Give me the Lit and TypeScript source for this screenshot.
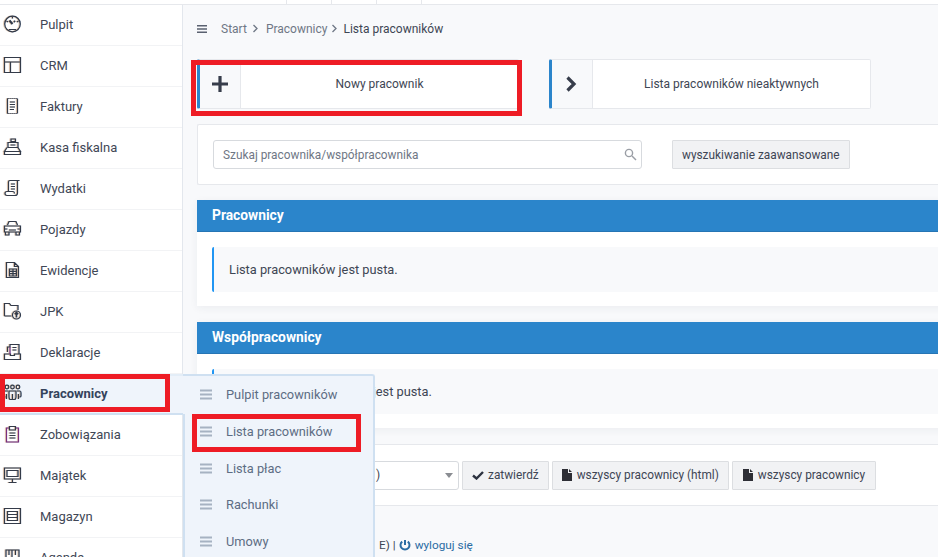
import { LitElement, html, css, svg } from "lit";
import { customElement } from "lit/decorators.js";

const icons: Record<string, unknown> = {
  gauge: svg`<circle cx="12.5" cy="12" r="7.8"/><path d="M9 17.5h7M12.5 4.5v2M6.5 9l1.6 1M18.5 9l-1.6 1"/><path stroke-width="2" d="M12.5 12L9.5 8.5M14 9l1 1"/>`,
  table: svg`<path d="M4.5 4.5h16v15h-16zM4.5 9h16M10.5 9v10.5"/>`,
  receipt: svg`<path stroke-dasharray="1.2 .8" d="M7.5 4.5h10M7.5 19.5h10"/><path d="M7.5 4.5v15M17.5 4.5v15M10 8h5M10 10.5h5M10 13h5M10 15.5h4"/>`,
  register: svg`<path d="M11 4h4.5v2.500H11zM8 7.500h10v5H8zM7 12.500l-2.500 4h16l-2.500-4M4.500 16.500v3h16v-3M10.500 10h5"/>`,
  expense: svg`<path d="M8.500 15.500V6a1.500 1.500 0 0 1 1.500-1.500h9.500M17.500 4.500V17a2.500 2.500 0 0 1-2.500 2.500H7a2 2 0 0 1-2-2c0-1 .500-2 2-2h6c1 0 1.500 1 1.500 2M11 8h4M11 10.500h4M11 13h4"/>`,
  car: svg`<path d="M7.500 8l1.500-3.500h7L17.500 8M4.500 9h16v6h-16zM5.500 15v3h3.500v-3M16 15v3h3.500v-3M4.500 12h3M17.500 12h3M9 13h7"/>`,
  doc: svg`<path d="M6.500 4.500h8l4 4v11h-12zM14.500 4.500v4h4M9.500 11h7v7h-7zM9.500 13.300h7M9.500 15.600h7M13 11v7"/>`,
  folder: svg`<path d="M4.500 17V4.500h5l1.500 2h7v4.500M4.500 17h7"/><circle cx="16.500" cy="16" r="4"/><path stroke-width="1.600" d="M16.500 18.500v-5M14.800 15.200l1.700-1.700 1.700 1.700"/>`,
  decl: svg`<path d="M7.500 12V7H10V4.500h9V14M12.500 7.500h4M12.500 10h4M4.500 14h6v1.500h4V14h6v5.500h-16z"/><path stroke="#7a2f80" d="M10 7v7"/>`,
  people: svg`<circle cx="7" cy="6" r="1.800"/><circle cx="12.500" cy="6" r="1.800"/><circle cx="18" cy="6" r="1.800"/><path d="M5 10h3M5 10c-1 0-1 1-1 2v3c0 1 1 1 1.500 1M17 10h3c1 0 1 1 1 2v3c0 1-1 1-1.500 1M9 10h7v6c0 1-.500 2-1 2.500h-5c-.500-.500-1-1.500-1-2.500zM12.500 13v5.500M6.500 13v5M18.500 13v5"/>`,
  clip: svg`<path stroke="#7a2f80" d="M9.500 6H6.500v14h12V6h-3"/><path d="M9.500 4.500h6V8h-6zM9.500 11h6M9.500 13.500h6M9.500 16h6"/>`,
  monitor: svg`<path d="M4.500 5h16v11h-16zM7 7.500h11v6H7zM12.500 16v3M8.500 19.500h8"/>`,
  list: svg`<path d="M4.500 4.500h16v15h-16zM7.500 7.500h10v9h-10zM7.500 10.500h10M7.500 13.500h10"/>`,
  agenda: svg`<path d="M6 5h6v14H6zM12 5h7v14h-7M9 5v5M15.500 5v5"/>`,
};

const side = [
  ["gauge", "Pulpit"], ["table", "CRM"], ["receipt", "Faktury"], ["register", "Kasa fiskalna"],
  ["expense", "Wydatki"], ["car", "Pojazdy"], ["doc", "Ewidencje"], ["folder", "JPK"],
  ["decl", "Deklaracje"], ["people", "Pracownicy"], ["clip", "Zobowiązania"], ["monitor", "Majątek"],
  ["list", "Magazyn"], ["agenda", "Agenda"],
];
const fly = ["Pulpit pracowników", "Lista pracowników", "Lista płac", "Rachunki", "Umowy"];

const bars = html`<svg class="bars" viewBox="0 0 12 11"><path d="M0 1.500h12M0 5.500h12M0 9.500h12"/></svg>`;
const file = html`<svg class="file" viewBox="0 0 10 12"><path d="M0 0h6v4h4v8H0zM7 0l3 3H7z"/></svg>`;

@customElement("app-root")
export class AppRoot extends LitElement {
  static styles = css`
    :host { display: block; position: relative; width: 938px; height: 557px; overflow: hidden; background: #f8f9fb; font-family: Roboto, "Liberation Sans", sans-serif; font-size: 12px; color: #3e4654; }
    .top { height: 4px; background: #fff; border-bottom: 1px solid #e6e8ec; display: flex; padding-left: 286px; }
    .top i { width: 45px; height: 4px; border-left: 1px solid #e6e8ec; box-sizing: border-box; }
    .wrap { display: flex; align-items: flex-start; }
    .side { width: 182px; flex: none; background: #fff; border-right: 1px solid #e3e7ed; }
    .row { height: 41px; box-sizing: border-box; padding-bottom: 2px; border-bottom: 1px solid #f2f3f5; display: flex; align-items: center; font-size: 13px; color: #3f4756; }
    .row svg { width: 24px; height: 24px; margin: 0 16px 0 0; flex: none; fill: none; stroke: #343b49; stroke-width: 1.2; filter: drop-shadow(-.6px 0 0 rgba(240,160,80,.45)) drop-shadow(.6px 0 0 rgba(90,160,240,.45)); }
    .row.on { background: #eff4fb; font-weight: 700; color: #34435c; width: 183px; border-bottom: 2px solid #cfe0f1; padding: 0 0 1px; box-shadow: inset 0 2px 0 #e3edf7; }
    .main { flex: none; width: 900px; padding: 0 0 0 14px; box-sizing: border-box; }
    .crumb { height: 54px; display: flex; align-items: center; color: #6f7785; padding-bottom: 7px; box-sizing: border-box; }
    .crumb .bars { width: 10px; height: 10px; margin-right: 14px; stroke: #5a6170; }
    .crumb b { font-weight: 400; color: #3e4654; }
    .bars { fill: none; stroke: #a6b2c2; stroke-width: 1.800; }
    .chev { width: 7px; height: 9px; fill: none; stroke: #6f7785; stroke-width: 1.300; flex: none; }
    .chev.a { margin: 0 7px 0 5px; }
    .chev.b { margin: 0 5px 0 4px; }
    .acts { display: flex; gap: 30px; height: 50px; margin-bottom: 15px; }
    .act { width: 322px; display: flex; box-sizing: border-box; background: #fff; border: 1px solid #e6e8ec; border-left: 3px solid #2b85cb; border-radius: 2px; }
    .act .ic { width: 40px; flex: none; background: #f8f9fb; border-right: 1px solid #e6e8ec; display: flex; align-items: center; justify-content: center; }
    .act .ic svg { width: 18px; height: 18px; fill: none; stroke: #373d4b; stroke-width: 3.200; }
    .act span { flex: 1; display: flex; align-items: center; justify-content: center; }
    .card { background: #fff; border: 1px solid #e6e8ec; border-right: 0; }
    .search { display: flex; align-items: center; gap: 30px; height: 59px; padding-left: 15px; margin-bottom: 15px; border-radius: 2px; }
    .inp { width: 429px; height: 29px; box-sizing: border-box; border: 1px solid #d7dade; border-radius: 3px; display: flex; align-items: center; justify-content: space-between; padding: 0 4px 0 9px; color: #6f7785; font-size: 11.850px; }
    .inp svg { width: 13px; height: 13px; fill: none; stroke: #9a9ea5; stroke-width: 1.400; }
    .btn { height: 29px; box-sizing: border-box; background: #f1f2f4; border: 1px solid #dcdee1; border-radius: 1px; display: flex; align-items: center; padding: 0 9px; gap: 4px; white-space: nowrap; color: #3e4654; font-size: 11.850px; }
    .btn.wide { padding: 0 10px; }
    .panel { background: #fff; margin-bottom: 16px; box-shadow: 0 2px 8px rgba(40,50,70,.06); height: 106px; }
    .panel h3 { margin: 0; height: 31px; background: #2b85cb; border-bottom: 1px solid #2675b4; color: #fff; font-size: 13.800px; line-height: 31px; padding-left: 15px; }
    .panel .msg { margin: 15px 0 0 15px; height: 45px; line-height: 46px; background: #f8f9fb; border-left: 2px solid #2196f3; border-radius: 2px; padding-left: 15px; font-size: 12.800px; }
    .tools { height: 60px; display: flex; align-items: center; gap: 3px; }
    .sel { width: 261px; height: 29px; box-sizing: border-box; border: 1px solid #d7dade; border-radius: 3px; display: flex; align-items: center; justify-content: space-between; padding: 0 5px 0 177px; }
    .sel i { width: 0; height: 0; border: 4px solid transparent; border-top: 5px solid #8a8d92; border-bottom: 0; }
    .check { width: 12px; height: 9px; fill: none; stroke: #2c3240; stroke-width: 2.400; }
    .file { width: 10px; height: 12px; fill: #2d2e35; margin-right: 1px; }
    .foot { padding: 32px 0 0 0; color: #3e4654; display: flex; align-items: center; gap: 3px; margin-left: 182px; white-space: nowrap; font-size: 11.800px; }
    .foot a { color: #2b6ca3; display: flex; align-items: center; gap: 4px; }
    .foot svg { width: 12px; height: 12px; fill: none; stroke: #2b6ca3; stroke-width: 2; }
    .fly { position: absolute; left: 183px; top: 374px; width: 192px; height: 190px; box-sizing: border-box; background: #eff4fb; border: 2px solid #cfe0f1; border-left: 0; border-bottom: 0; border-radius: 0 3px 0 0; padding: 0 0 0 17px; color: #5d6d84; z-index: 2; }
    .fly::before { content: ""; position: absolute; left: 0; top: 38px; bottom: 0; width: 2px; background: #cfe0f1; }
    .fly .it { height: 36.850px; display: flex; align-items: center; gap: 14px; font-size: 12.800px; }
    .fly .bars { width: 12px; height: 11px; flex: none; }
    .mark { position: absolute; border: 5px solid #ee1c25; box-sizing: border-box; z-index: 3; }
    .m1 { left: 191px; top: 60px; width: 331px; height: 56px; }
    .m2 { left: 0; top: 374px; width: 170px; height: 38px; }
    .m3 { left: 192px; top: 414px; width: 169px; height: 38px; }
  `;

  render() {
    const chev = (c: string) => html`<svg class="chev ${c}" viewBox="0 0 7 9"><path d="M1.500 1l3.500 3.500L1.500 8"/></svg>`;
    return html`
      <div class="top"><i></i><i></i><i></i><i></i></div>
      <div class="wrap">
        <nav class="side">
          ${side.map(([ic, t]) => html`<div class="row ${t === "Pracownicy" ? "on" : ""}"><svg viewBox="0 0 24 24">${icons[ic]}</svg><span>${t}</span></div>`)}
        </nav>
        <main class="main">
          <div class="crumb">
            ${bars}<span>Start</span>${chev("a")}<span>Pracownicy</span>${chev("b")}<b>Lista pracowników</b>
          </div>
          <div class="acts">
            <div class="act"><div class="ic"><svg viewBox="0 0 18 18"><path d="M9 1v16M1 9h16"/></svg></div><span>Nowy pracownik</span></div>
            <div class="act"><div class="ic"><svg viewBox="0 0 18 18"><path d="M4.500 2.500l6.500 6.500-6.500 6.500"/></svg></div><span>Lista pracowników nieaktywnych</span></div>
          </div>
          <div class="card search">
            <div class="inp"><span>Szukaj pracownika/współpracownika</span><svg viewBox="0 0 13 13"><circle cx="5" cy="5" r="3.600"/><path d="M8 8l4 4"/></svg></div>
            <div class="btn">wyszukiwanie zaawansowane</div>
          </div>
          <section class="panel"><h3>Pracownicy</h3><div class="msg">Lista pracowników jest pusta.</div></section>
          <section class="panel"><h3>Współpracownicy</h3><div class="msg">Lista współpracowników jest pusta.</div></section>
          <div class="card tools">
            <div class="sel"><span>)</span><i></i></div>
            <div class="btn"><svg class="check" viewBox="0 0 12 9"><path d="M1 4.500L4.500 7.500 11 1"/></svg>zatwierdź</div>
            <div class="btn">${file}wszyscy pracownicy (html)</div>
            <div class="btn wide">${file}wszyscy pracownicy</div>
          </div>
          <div class="foot"><span>E) |</span><a><svg viewBox="0 0 12 12"><path d="M6 1v5M3.200 2.600a4.500 4.500 0 1 0 5.600 0"/></svg>wyloguj się</a></div>
        </main>
      </div>
      <div class="fly">${fly.map((t) => html`<div class="it">${bars}<span>${t}</span></div>`)}</div>
      <div class="mark m1"></div><div class="mark m2"></div><div class="mark m3"></div>
    `;
  }
}
